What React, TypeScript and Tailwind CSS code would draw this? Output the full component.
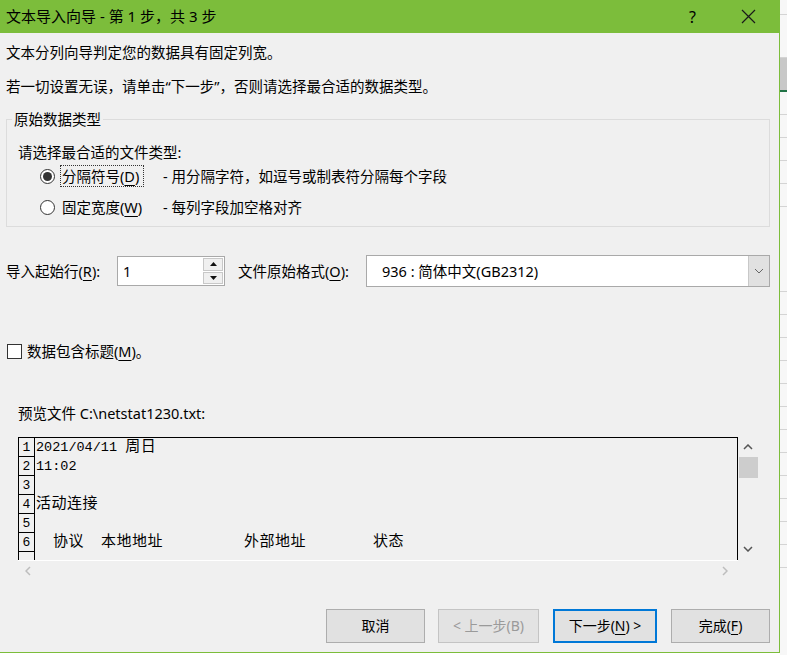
import React from "react";

const ui = "font-['Noto_Sans','Noto_Sans_CJK_SC',sans-serif]";

function Key({ c }: { c: string }) {
  return <span className="underline underline-offset-[3px] decoration-1">{c}</span>;
}

function Radio({ checked }: { checked?: boolean }) {
  return (
    <span className="w-[15px] h-[15px] rounded-full border border-[#333] bg-white flex items-center justify-center shrink-0">
      {checked && <span className="w-[9px] h-[9px] rounded-full bg-[#333]" />}
    </span>
  );
}

function Button({
  children,
  w,
  variant,
}: {
  children: React.ReactNode;
  w: string;
  variant?: "default" | "disabled";
}) {
  const base = "h-[34px] flex items-center justify-center text-[14px] leading-[20px]";
  if (variant === "default")
    return <div className={`${base} ${w} bg-[#e1e1e1] border-2 border-[#0078d7] text-black`}>{children}</div>;
  if (variant === "disabled")
    return <div className={`${base} ${w} bg-[#e3e3e3] border border-[#c4c4c4] text-[#9a9a9a]`}>{children}</div>;
  return <div className={`${base} ${w} bg-[#e1e1e1] border border-[#adadad] text-black`}>{children}</div>;
}

// CJK glyphs in the preview run a bit wider than the mono digits
const cjk = "text-[15px] tracking-[0.5px]";

const previewRows: { n: string; row: React.ReactNode }[] = [
  {
    n: "1",
    row: (
      <span>
        2021/04/11 <span className={cjk}>周日</span>
      </span>
    ),
  },
  { n: "2", row: <span>11:02</span> },
  { n: "3", row: <span /> },
  { n: "4", row: <span className={cjk}>活动连接</span> },
  { n: "5", row: <span /> },
  {
    n: "6",
    row: (
      <span className={`flex ${cjk}`}>
        <span className="ml-[17px] w-[48px]">协议</span>
        <span className="w-[143px]">本地地址</span>
        <span className="w-[129px]">外部地址</span>
        <span>状态</span>
      </span>
    ),
  },
  { n: "", row: <span /> },
];

export default function App() {
  return (
    <div className={`w-[787px] h-[655px] flex bg-white overflow-hidden ${ui}`}>
      {/* Dialog */}
      <div className="w-[780px] h-[653px] shrink-0 flex flex-col bg-[#f0f0f0] border-r border-b border-[#7cbd3b] text-[14.5px] text-black">
        {/* Title bar */}
        <div className="h-[33px] shrink-0 bg-[#7cbd3b] flex items-center pl-[6px] text-[15px]">
          <span>文本导入向导 - 第 1 步，共 3 步</span>
          <span className="ml-auto text-[16px]">?</span>
          <svg className="ml-[45px] mr-[23px]" width="15" height="15" viewBox="0 0 15 15">
            <path d="M1 1 L14 14 M14 1 L1 14" stroke="#1a1a1a" strokeWidth="1.2" fill="none" />
          </svg>
        </div>

        <div className="pl-[6px] mt-[9px] leading-[20px]">文本分列向导判定您的数据具有固定列宽。</div>
        <div className="pl-[6px] mt-[14px] leading-[20px]">若一切设置无误，请单击“下一步”，否则请选择最合适的数据类型。</div>

        {/* Group box */}
        <fieldset className="mx-[6px] mr-[9px] mt-[13px] border border-[#dcdcdc] pl-[11px] pb-[8px]">
          <legend className="-ml-[6px] px-[2px] leading-[20px]">原始数据类型</legend>
          <div className="mt-[13px] leading-[20px]">请选择最合适的文件类型:</div>
          <div className="mt-[3px] h-[22px] flex items-center">
            <span className="ml-[22px]">
              <Radio checked />
            </span>
            <span className="ml-[5px] w-[84px] h-[22px] border border-dotted border-[#333] flex items-center pl-[1px] leading-[20px]">
              分隔符号(<Key c="D" />)
            </span>
            <span className="ml-[19px] leading-[20px]">- 用分隔字符，如逗号或制表符分隔每个字段</span>
          </div>
          <div className="mt-[9px] h-[22px] flex items-center">
            <span className="ml-[22px]">
              <Radio />
            </span>
            <span className="ml-[6px] w-[83px] leading-[20px] pl-[1px]">
              固定宽度(<Key c="W" />)
            </span>
            <span className="ml-[19px] leading-[20px]">- 每列字段加空格对齐</span>
          </div>
        </fieldset>

        {/* Start row + file origin */}
        <div className="mt-[28px] flex items-center h-[32px] pl-[6px]">
          <span className="w-[111px] leading-[20px]">
            导入起始行(<Key c="R" />):
          </span>
          <div className="w-[108px] h-[30px] bg-white border border-[#a9a9a9] flex items-center">
            <span className="pl-[5px] flex-1 leading-[20px]">1</span>
            <div className="w-[20px] h-[26px] mr-[1px] flex flex-col gap-[1px]">
              <div className="flex-1 bg-[#f0f0f0] border border-[#c8c8c8] flex items-center justify-center">
                <svg width="7" height="4" viewBox="0 0 7 4">
                  <path d="M0 4 L3.5 0 L7 4 Z" fill="#111" />
                </svg>
              </div>
              <div className="flex-1 bg-[#f0f0f0] border border-[#c8c8c8] flex items-center justify-center">
                <svg width="7" height="4" viewBox="0 0 7 4">
                  <path d="M0 0 L3.5 4 L7 0 Z" fill="#111" />
                </svg>
              </div>
            </div>
          </div>
          <span className="ml-[13px] w-[128px] leading-[20px]">
            文件原始格式(<Key c="O" />):
          </span>
          <div className="w-[404px] h-[32px] bg-white border border-[#a9a9a9] flex items-center">
            <span className="pl-[15px] flex-1 leading-[20px]">936 : 简体中文(GB2312)</span>
            <div className="w-[21px] h-full bg-[#e1e1e1] border-l border-[#c8c8c8] flex items-center justify-center">
              <svg width="10" height="6" viewBox="0 0 10 6">
                <path d="M1 1 L5 5 L9 1" stroke="#666" strokeWidth="1" fill="none" />
              </svg>
            </div>
          </div>
        </div>

        {/* Checkbox */}
        <div className="mt-[54px] pl-[7px] flex items-center h-[20px]">
          <span className="w-[15px] h-[15px] bg-white border border-[#333]" />
          <span className="ml-[5px] leading-[20px]">
            数据包含标题(<Key c="M" />)。
          </span>
        </div>

        <div className="mt-[42px] pl-[18px] leading-[20px]">预览文件 C:\netstat1230.txt:</div>

        {/* Preview */}
        <div className="mt-[14px] ml-[18px] w-[740px] flex flex-col">
          <div className="flex h-[123px]">
            <div className="w-[720px] border-l border-t border-r border-black overflow-hidden font-['Liberation_Mono','Noto_Sans_CJK_SC',monospace] text-[13.5px]">
              {previewRows.map((r, i) => (
                <div key={i} className="flex h-[19px]">
                  <div className="w-[16px] shrink-0 border-r border-b border-black flex items-end justify-center text-[13px] leading-[16px]">
                    {r.n}
                  </div>
                  <div className="pl-px leading-[19px] whitespace-pre">{r.row}</div>
                </div>
              ))}
            </div>
            <div className="w-[20px] flex flex-col items-center">
              <svg className="mt-[7px]" width="10" height="6" viewBox="0 0 10 6">
                <path d="M1 5 L5 1 L9 5" stroke="#555" strokeWidth="1.5" fill="none" />
              </svg>
              <div className="mt-[7px] ml-px w-[19px] h-[21px] bg-[#cdcdcd]" />
              <svg className="mt-auto mb-[8px]" width="10" height="6" viewBox="0 0 10 6">
                <path d="M1 1 L5 5 L9 1" stroke="#555" strokeWidth="1.5" fill="none" />
              </svg>
            </div>
          </div>
          <div className="w-[720px] h-px bg-white" />
          <div className="w-[720px] h-[20px] flex items-center px-[7px] justify-between">
            <svg width="6" height="10" viewBox="0 0 6 10">
              <path d="M5 1 L1 5 L5 9" stroke="#bdbdbd" strokeWidth="1.5" fill="none" />
            </svg>
            <svg className="mr-[3px]" width="6" height="10" viewBox="0 0 6 10">
              <path d="M1 1 L5 5 L1 9" stroke="#bdbdbd" strokeWidth="1.5" fill="none" />
            </svg>
          </div>
        </div>

        {/* Buttons */}
        <div className="mt-[28px] flex justify-end pr-[9px]">
          <Button w="w-[99px]">取消</Button>
          <div className="ml-[13px]">
            <Button w="w-[101px]" variant="disabled">
              &lt; 上一步(B)
            </Button>
          </div>
          <div className="ml-[14px]">
            <Button w="w-[104px]" variant="default">
              <span>
                下一步(<Key c="N" />) &gt;
              </span>
            </Button>
          </div>
          <div className="ml-[14px]">
            <Button w="w-[99px]">
              <span>
                完成(<Key c="F" />)
              </span>
            </Button>
          </div>
        </div>
      </div>

      {/* Spreadsheet peeking out behind the dialog */}
      <div className="w-[7px] flex flex-col bg-[#f7f7f7]">
        <div className="h-[15px] border-b border-[#d4d4d4]" />
        <div className="h-[43px] border-b border-[#d4d4d4]" />
        <div className="h-[34px] bg-[#c8c8c8] border-b-2 border-[#217346]" />
        <div className="h-[23px] border-b border-[#d4d4d4]" />
        <div className="h-[23px] border-b border-[#d4d4d4]" />
        <div className="h-[23px] border-b border-[#d4d4d4]" />
        <div className="h-[23px] border-b border-[#d4d4d4]" />
        <div className="h-[23px] border-b border-[#d4d4d4]" />
        <div className="h-[85px] border-b border-[#d4d4d4]" />
        <div className="h-[23px] border-b border-[#d4d4d4]" />
        <div className="h-[23px] border-b border-[#d4d4d4]" />
        <div className="h-[23px] border-b border-[#d4d4d4]" />
        <div className="h-[23px] border-b border-[#d4d4d4]" />
        <div className="h-[23px] border-b border-[#d4d4d4]" />
        <div className="h-[23px] border-b border-[#d4d4d4]" />
        <div className="h-[23px] border-b border-[#d4d4d4]" />
        <div className="h-[23px] border-b border-[#d4d4d4]" />
        <div className="h-[23px] border-b border-[#d4d4d4]" />
        <div className="h-[23px] border-b border-[#d4d4d4]" />
        <div className="h-[23px] border-b border-[#d4d4d4]" />
        <div className="h-[23px] border-b border-[#d4d4d4]" />
      </div>
    </div>
  );
}
